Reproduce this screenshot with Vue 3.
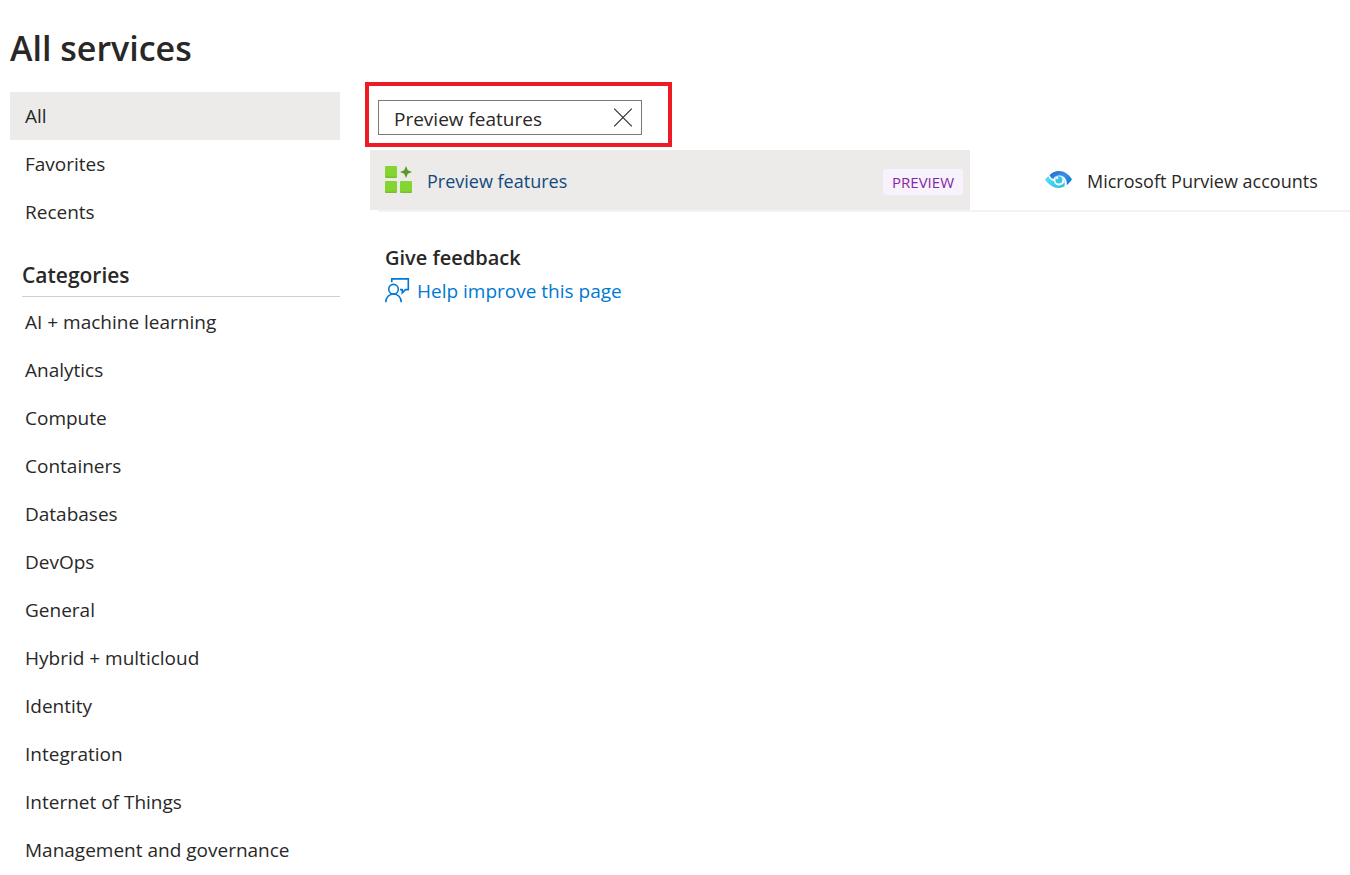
<script setup>
import { ref } from 'vue'

const query = ref('Preview features')
const views = ['All', 'Favorites', 'Recents']
const active = ref('All')
const categories = [
  'AI + machine learning',
  'Analytics',
  'Compute',
  'Containers',
  'Databases',
  'DevOps',
  'General',
  'Hybrid + multicloud',
  'Identity',
  'Integration',
  'Internet of Things',
  'Management and governance'
]
</script>

<template>
  <div class="page">
    <h1>All services</h1>
    <div class="columns">
      <nav class="sidebar" aria-label="Services">
        <a
          v-for="view in views"
          :key="view"
          href="#"
          class="item"
          :class="{ selected: view === active }"
          @click.prevent="active = view"
        >{{ view }}</a>
        <h2>Categories</h2>
        <a
          v-for="category in categories"
          :key="category"
          href="#"
          class="item"
          :class="{ selected: category === active }"
          @click.prevent="active = category"
        >{{ category }}</a>
      </nav>

      <main>
        <div class="highlight">
          <div class="search">
            <input v-model="query" type="text" aria-label="Filter services" />
            <button type="button" aria-label="Clear filter" @click="query = ''">
              <svg width="20" height="20" viewBox="0 0 20 20" fill="none" stroke="#323130" stroke-width="1.2">
                <path d="M1.2.7 18.800 18.300M18.800.7 1.2 18.300" />
              </svg>
            </button>
          </div>
        </div>

        <div class="results">
          <a href="#" class="result current">
            <svg width="28" height="28" viewBox="0 0 28 28" aria-hidden="true">
              <defs>
                <linearGradient id="tile" x1="0" y1="0" x2="0" y2="1">
                  <stop offset="0" stop-color="#86d633" />
                  <stop offset=".8" stop-color="#83d42f" />
                  <stop offset="1" stop-color="#70bd25" />
                </linearGradient>
              </defs>
              <rect x="0" y="0" width="12" height="12" rx="1" fill="url(#tile)" />
              <rect x="0" y="15" width="12" height="12" rx="1" fill="url(#tile)" />
              <rect x="15" y="15" width="12" height="12" rx="1" fill="url(#tile)" />
              <path d="M21 0 22.800 4.200 27 6 22.800 7.800 21 12 19.200 7.800 15 6 19.200 4.200Z" fill="#5e9624" />
            </svg>
            <span class="name">Preview features</span>
            <span class="badge">PREVIEW</span>
          </a>
          <a href="#" class="result">
            <svg width="28" height="28" viewBox="0 0 28 28" aria-hidden="true">
              <defs>
                <linearGradient id="lid" x1="0" y1="0" x2="1" y2="1">
                  <stop offset="0" stop-color="#1668c9" />
                  <stop offset=".45" stop-color="#3f8ee6" />
                  <stop offset="1" stop-color="#0672d3" />
                </linearGradient>
                <linearGradient id="base" x1="0" y1="0" x2="1" y2="1">
                  <stop offset="0" stop-color="#55e5fa" />
                  <stop offset="1" stop-color="#2bbde0" />
                </linearGradient>
              </defs>
              <path d="M4.500 9.200C7.500 6.400 10.500 5 14 5c5.300 0 9.800 3.200 13 8.200-1.300 2.200-2.900 4.100-5.300 6 .7-5.200-1.900-8.700-6-9.600-3.300-.7-6.200.6-7.300 3.500-1.700-.6-2.900-1.900-3.900-3.900Z" fill="url(#lid)" />
              <path d="M3.300 10.200C4.700 13.300 6.700 14.800 9 14.900c.3 3 2.800 4.700 5.600 4.500 2.200-.2 3.900-1.400 4.700-3.400.7 1.400.7 3-.1 4.600-1.500.8-3.200 1.300-5.200 1.300C8.600 21.900 3.700 18.700 0 13.400c1-1.300 2-2.400 3.300-3.200Z" fill="url(#base)" />
              <path d="M10 11.900c1-1.300 2.500-1.800 4.200-1.500 3.300.5 5.400 2.800 5.300 6" fill="none" stroke="#8adcf5" stroke-width=".6" />
              <circle cx="13.900" cy="13.900" r="3.500" fill="#35c5e9" />
              <circle cx="12.200" cy="12.200" r="1.100" fill="#fff" />
            </svg>
            <span class="name">Microsoft Purview accounts</span>
          </a>
        </div>

        <section class="feedback">
          <h3>Give feedback</h3>
          <a href="#">
            <svg width="25" height="25" viewBox="0 0 25 25" fill="none" stroke="#0078d4" stroke-width="1.600" aria-hidden="true">
              <path d="M6.800 4.200V.9h16.500v10.700h-2.800l-3.200 3.200v-3.200h-2.300" />
              <circle cx="8.500" cy="11.200" r="4.800" />
              <path d="M.8 24.300c0-4.900 3.300-8.300 7.700-8.300s7.700 3.400 7.700 8.300" />
            </svg>
            <span>Help improve this page</span>
          </a>
        </section>
      </main>
    </div>
  </div>
</template>

<style>
body {
  margin: 0;
  background: #fff;
}
</style>

<style scoped>
.page {
  box-sizing: border-box;
  padding-left: 10px;
  overflow: hidden;
  font-family: "Segoe UI", "Open Sans", "Noto Sans", sans-serif;
  font-size: 19px;
  line-height: 24px;
  color: #292827;
}

h1 {
  margin: 0;
  padding: 24px 0 20px;
  font-size: 34px;
  line-height: 48px;
  font-weight: 600;
}

.columns {
  display: flex;
  gap: 25px;
}

.sidebar {
  flex: 0 0 330px;
}

.item {
  display: block;
  padding: 12px 15px;
  color: inherit;
  text-decoration: none;
}

.item.selected {
  background: #ecebea;
}

h2 {
  margin: 25px 0 1px 12px;
  padding-bottom: 7px;
  border-bottom: 1px solid #d2d0ce;
  font-size: 21px;
  line-height: 28px;
  font-weight: 600;
}

main {
  flex: 1;
  min-width: 0;
  margin-top: -10px;
}

.highlight {
  box-sizing: border-box;
  width: 307px;
  padding: 14px 26px 8px 9px;
  border: 4px solid #ed1c24;
}

.search {
  display: flex;
  align-items: center;
  box-sizing: border-box;
  height: 35px;
  padding: 0 8px 0 15px;
  border: 1px solid #7a7978;
}

.search input {
  flex: 1;
  min-width: 0;
  padding: 2px 0 0;
  border: 0;
  outline: 0;
  background: none;
  font: inherit;
  color: inherit;
}

.search button {
  display: flex;
  padding: 0;
  border: 0;
  background: none;
}

.results {
  display: grid;
  grid-template-columns: 600px 1fr;
  column-gap: 60px;
  margin: 3px 0 0 5px;
  background: linear-gradient(#f3f2f1, #f3f2f1) 8px 100% / 100% 2px no-repeat;
  padding-bottom: 2px;
}

.result {
  display: flex;
  align-items: center;
  box-sizing: border-box;
  height: 60px;
  padding: 0 7px 0 15px;
  color: inherit;
  text-decoration: none;
  white-space: nowrap;
}

.result.current {
  background: #ecebea;
  color: #124a7d;
}

.name {
  flex: 1;
  margin-left: 14px;
  padding-top: 2px;
  font-size: 18px;
}

.badge {
  margin-top: 4px;
  padding: 1px 9px;
  border-radius: 3px;
  background: #f7f2fb;
  color: #8527a5;
  font-size: 15px;
  font-weight: 500;
}

.feedback {
  margin: 34px 0 0 20px;
}

h3 {
  margin: 0;
  font-size: 20px;
  line-height: 24px;
  font-weight: 600;
}

.feedback a {
  display: inline-flex;
  align-items: center;
  gap: 7px;
  margin-top: 8px;
  color: #0078d4;
  text-decoration: none;
}
</style>
